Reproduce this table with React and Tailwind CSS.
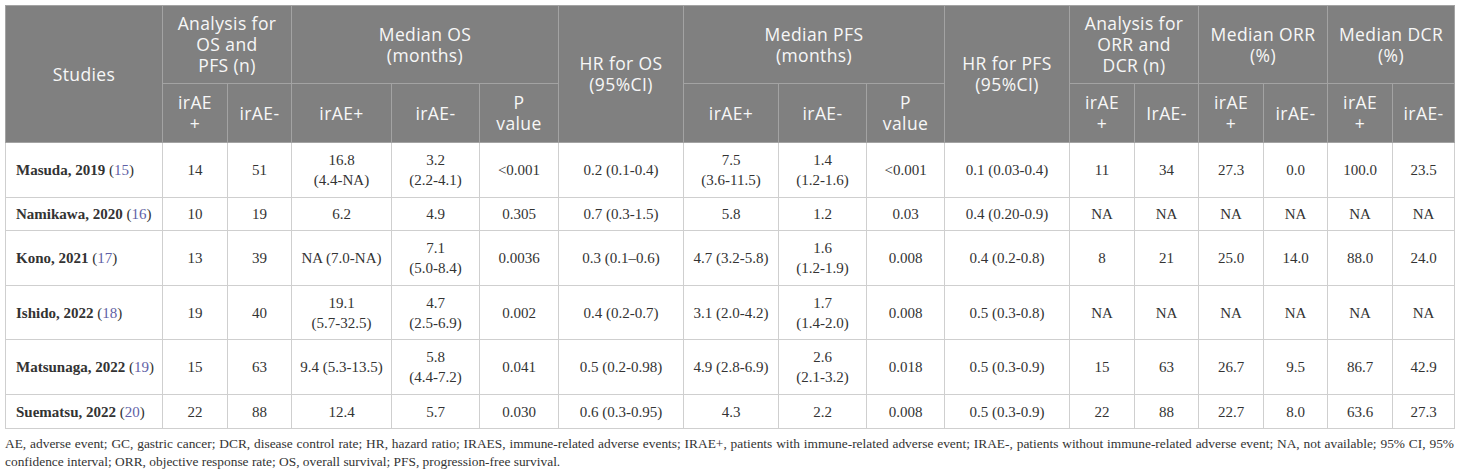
import React from "react";

const widths = [157, 65, 64, 100, 88, 79, 125, 95, 88, 78, 125, 65, 64, 65, 64, 65, 62];

const rows = [
  {
    h: "h-[55px]",
    name: "Masuda, 2019",
    ref: "15",
    cells: ["14", "51", ["16.8", "(4.4-NA)"], ["3.2", "(2.2-4.1)"], "<0.001", "0.2 (0.1-0.4)", ["7.5", "(3.6-11.5)"], ["1.4", "(1.2-1.6)"], "<0.001", "0.1 (0.03-0.4)", "11", "34", "27.3", "0.0", "100.0", "23.5"],
  },
  {
    h: "h-[33px]",
    name: "Namikawa, 2020",
    ref: "16",
    cells: ["10", "19", "6.2", "4.9", "0.305", "0.7 (0.3-1.5)", "5.8", "1.2", "0.03", "0.4 (0.20-0.9)", "NA", "NA", "NA", "NA", "NA", "NA"],
  },
  {
    h: "h-[55px]",
    name: "Kono, 2021",
    ref: "17",
    cells: ["13", "39", "NA (7.0-NA)", ["7.1", "(5.0-8.4)"], "0.0036", "0.3 (0.1–0.6)", "4.7 (3.2-5.8)", ["1.6", "(1.2-1.9)"], "0.008", "0.4 (0.2-0.8)", "8", "21", "25.0", "14.0", "88.0", "24.0"],
  },
  {
    h: "h-[54px]",
    name: "Ishido, 2022",
    ref: "18",
    cells: ["19", "40", ["19.1", "(5.7-32.5)"], ["4.7", "(2.5-6.9)"], "0.002", "0.4 (0.2-0.7)", "3.1 (2.0-4.2)", ["1.7", "(1.4-2.0)"], "0.008", "0.5 (0.3-0.8)", "NA", "NA", "NA", "NA", "NA", "NA"],
  },
  {
    h: "h-[55px]",
    name: "Matsunaga, 2022",
    ref: "19",
    cells: ["15", "63", "9.4 (5.3-13.5)", ["5.8", "(4.4-7.2)"], "0.041", "0.5 (0.2-0.98)", "4.9 (2.8-6.9)", ["2.6", "(2.1-3.2)"], "0.018", "0.5 (0.3-0.9)", "15", "63", "26.7", "9.5", "86.7", "42.9"],
  },
  {
    h: "h-[34px]",
    name: "Suematsu, 2022",
    ref: "20",
    cells: ["22", "88", "12.4", "5.7", "0.030", "0.6 (0.3-0.95)", "4.3", "2.2", "0.008", "0.5 (0.3-0.9)", "22", "88", "22.7", "8.0", "63.6", "27.3"],
  },
];

const th = "border border-[#a3a3a3] px-1 text-center align-middle font-normal whitespace-nowrap";

function Lines({ items }) {
  return (
    <span className="flex flex-col items-center">
      {items.map((t, i) => (
        <span key={i}>{t}</span>
      ))}
    </span>
  );
}

function Cell({ v }) {
  if (Array.isArray(v)) return <Lines items={v} />;
  return v;
}

export default function App() {
  return (
    <div className="bg-white p-[5px] w-[1460px] h-[473px]">
      <table
        className="table-fixed border-collapse w-[1449px]"
        style={{ fontFamily: '"Liberation Serif", serif' }}
      >
        <colgroup>
          {widths.map((w, i) => (
            <col key={i} style={{ width: w }} />
          ))}
        </colgroup>
        <thead
          className="bg-[#808080] text-[#f7f7f7] text-[17.5px] leading-[21px] tracking-[0.4px]"
          style={{ fontFamily: '"Open Sans", sans-serif' }}
        >
          <tr className="h-[78px]">
            <th rowSpan={2} className={th}>Studies</th>
            <th colSpan={2} className={th}><Lines items={["Analysis for", "OS and", "PFS (n)"]} /></th>
            <th colSpan={3} className={th}><Lines items={["Median OS", "(months)"]} /></th>
            <th rowSpan={2} className={th}><Lines items={["HR for OS", "(95%CI)"]} /></th>
            <th colSpan={3} className={th}><Lines items={["Median PFS", "(months)"]} /></th>
            <th rowSpan={2} className={th}><Lines items={["HR for PFS", "(95%CI)"]} /></th>
            <th colSpan={2} className={th}><Lines items={["Analysis for", "ORR and", "DCR (n)"]} /></th>
            <th colSpan={2} className={th}><Lines items={["Median ORR", "(%)"]} /></th>
            <th colSpan={2} className={th}><Lines items={["Median DCR", "(%)"]} /></th>
          </tr>
          <tr className="h-[59px]">
            <th className={th}><Lines items={["irAE", "+"]} /></th>
            <th className={th}>irAE-</th>
            <th className={th}>irAE+</th>
            <th className={th}>irAE-</th>
            <th className={th}><Lines items={["P", "value"]} /></th>
            <th className={th}>irAE+</th>
            <th className={th}>irAE-</th>
            <th className={th}><Lines items={["P", "value"]} /></th>
            <th className={th}><Lines items={["irAE", "+"]} /></th>
            <th className={th}>IrAE-</th>
            <th className={th}><Lines items={["irAE", "+"]} /></th>
            <th className={th}>irAE-</th>
            <th className={th}><Lines items={["irAE", "+"]} /></th>
            <th className={th}>irAE-</th>
          </tr>
        </thead>
        <tbody className="text-[15px] leading-[20px] text-[#333333]">
          {rows.map((r, i) => (
            <tr key={i} className={r.h}>
              <td className="border border-[#cfcfcf] pl-[10px] pr-1 text-left align-middle whitespace-nowrap">
                <span className="font-bold">{r.name}</span>{" "}
                (<span className="text-[#5f5fa6]">{r.ref}</span>)
              </td>
              {r.cells.map((c, j) => (
                <td
                  key={j}
                  className="border border-[#cfcfcf] px-1 text-center align-middle whitespace-nowrap"
                >
                  <Cell v={c} />
                </td>
              ))}
            </tr>
          ))}
        </tbody>
      </table>
      <div
        className="mt-[6px] text-[13.4px] leading-[18px] text-[#333333] w-[1449px]"
        style={{ fontFamily: '"Liberation Serif", serif' }}
      >
        <p className="text-justify [text-align-last:justify]">
          AE, adverse event; GC, gastric cancer; DCR, disease control rate; HR, hazard ratio; IRAES, immune-related adverse events; IRAE+, patients with immune-related adverse event; IRAE-, patients without immune-related adverse event; NA, not available; 95% CI, 95%
        </p>
        <p>
          confidence interval; ORR, objective response rate; OS, overall survival; PFS, progression-free survival.
        </p>
      </div>
    </div>
  );
}
